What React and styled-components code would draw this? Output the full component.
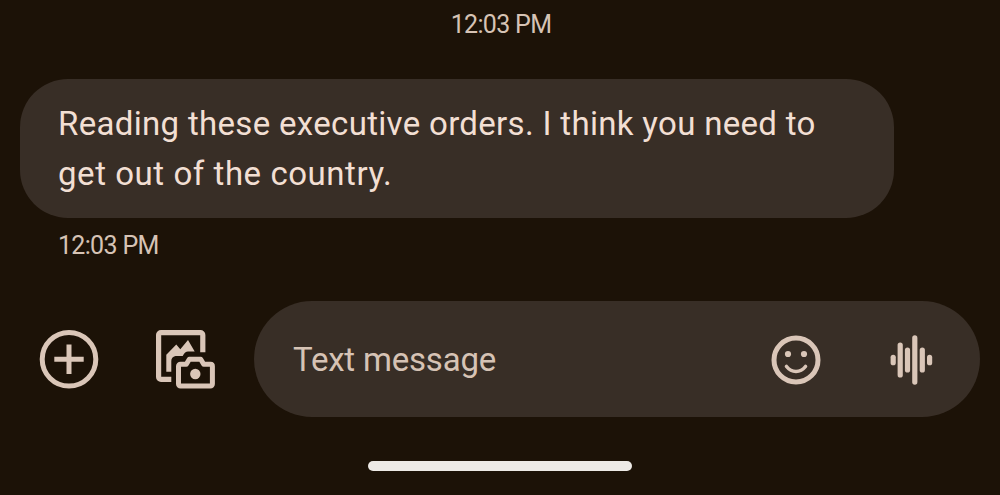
import React from 'react'
import styled, { createGlobalStyle } from 'styled-components'

const GlobalStyle = createGlobalStyle`
  * {
    box-sizing: border-box;
  }

  body {
    margin: 0;
    background-color: #1c1207;
    font-family: Roboto, 'Liberation Sans', sans-serif;
  }
`

const Screen = styled.main`
  display: flex;
  flex-direction: column;
  width: 1000px;
  height: 495px;
  overflow: hidden;
  background-color: #1c1207;
`

const Timestamp = styled.time`
  display: block;
  font-size: 25px;
  line-height: 30px;
  letter-spacing: -0.68px;
  color: #d6c3b5;
  white-space: nowrap;
`

const Divider = styled.div`
  display: flex;
  justify-content: center;
  padding: 10px 0 0 2px;
`

const Message = styled.article`
  padding: 39px 20px 0;
`

const Bubble = styled.div`
  width: 874px;
  height: 139px;
  padding: 20px 38px 0;
  border-radius: 48px;
  background-color: #382e26;
`

const Line = styled.span`
  display: block;
  font-size: 33px;
  line-height: 50px;
  letter-spacing: ${({ $tracking }) => $tracking}px;
  color: #f2dfd3;
  white-space: nowrap;
`

const Received = styled.div`
  padding: 13px 0 0 38px;
`

const Composer = styled.footer`
  display: flex;
  align-items: center;
  height: 116px;
  margin-top: 40px;
  padding: 0 20px 0 39px;
`

const IconButton = styled.button`
  display: flex;
  flex: none;
  width: ${({ $size }) => $size}px;
  height: ${({ $size }) => $size}px;
  margin: 0 ${({ $gap }) => $gap || 0}px 0 0;
  padding: 0;
  border: 0;
  background: none;
  color: #dac6b8;
  cursor: pointer;

  & svg {
    width: 100%;
    height: 100%;
  }
`

const Field = styled.div`
  display: flex;
  align-items: center;
  flex: 1;
  height: 116px;
  padding: 1px 41px 0 39px;
  border-radius: 58px;
  background-color: #382e26;
`

const Placeholder = styled.span`
  flex: 1;
  font-size: 33px;
  line-height: 40px;
  letter-spacing: -0.2px;
  color: #d6c3b5;
  white-space: nowrap;
`

const HomeBar = styled.div`
  width: 264px;
  height: 10px;
  margin: 44px auto 0;
  border-radius: 5px;
  background-color: #edeae6;
`

const AddIcon = () => (
  <svg viewBox="0 0 60 60" fill="none" stroke="currentColor" strokeWidth="5">
    <circle cx="30" cy="30.3" r="26.8" />
    <path d="M30 15.5v29.500M15.300 30.300h29.400" />
  </svg>
)

const GalleryIcon = () => (
  <svg viewBox="0 0 60 60" fill="none">
    <path
      d="M16.300 50.300H6A2.400 2.400 0 0 1 3.600 47.900V6.100A2.400 2.400 0 0 1 6 3.700H45.400A2.400 2.400 0 0 1 47.800 6.100V23.300"
      stroke="currentColor"
      strokeWidth="5.2"
    />
    <path
      d="M11.300 42.700V25.700L21.300 15.500L25.300 20.200L33 11L39.700 22.600H33Q30 22.600 27.700 27H20.500Q16.300 28 16.300 32V42.700Z"
      fill="currentColor"
    />
    <path
      d="M25.500 35.200H31.300L34.300 30.200H45.700L48.700 35.200H55.500A2 2 0 0 1 57.400 37.200V55A2 2 0 0 1 55.400 57H25.500A2 2 0 0 1 23.500 55V37.200A2 2 0 0 1 25.500 35.200Z"
      stroke="currentColor"
      strokeWidth="5"
      strokeLinejoin="round"
    />
    <circle cx="40.300" cy="45" r="5.200" fill="currentColor" />
  </svg>
)

const EmojiIcon = () => (
  <svg viewBox="0 0 50 50" fill="none">
    <circle cx="25" cy="25" r="22" stroke="currentColor" strokeWidth="5" />
    <circle cx="17" cy="19" r="3.1" fill="currentColor" />
    <circle cx="33" cy="19" r="3.1" fill="currentColor" />
    <path d="M15.500 31.500Q19.500 36.500 25 36.500T34.500 31.500" stroke="currentColor" strokeWidth="3.600" strokeLinecap="round" />
  </svg>
)

const bars = [
  [4.2, 10.6],
  [11.2, 35],
  [18.5, 25],
  [25.8, 49.4],
  [33.3, 25],
  [40.6, 10.6],
]

const VoiceIcon = () => (
  <svg viewBox="0 0 50 50" fill="currentColor">
    {bars.map(([x, height]) => (
      <rect key={x} x={x - 2.6} y={25 - height / 2} width="5.2" height={height} rx="2.6" />
    ))}
  </svg>
)

const lines = [
  { text: 'Reading these executive orders. I think you need to', tracking: 0.32 },
  { text: 'get out of the country.', tracking: 0.55 },
]

const App = () => (
  <>
    <GlobalStyle />
    <Screen>
      <Divider>
        <Timestamp>12:03 PM</Timestamp>
      </Divider>
      <Message>
        <Bubble>
          {lines.map(({ text, tracking }) => (
            <Line key={text} $tracking={tracking}>{text}</Line>
          ))}
        </Bubble>
        <Received>
          <Timestamp>12:03 PM</Timestamp>
        </Received>
      </Message>
      <Composer>
        <IconButton $size={60} $gap={56} aria-label="Add">
          <AddIcon />
        </IconButton>
        <IconButton $size={60} $gap={39} aria-label="Gallery">
          <GalleryIcon />
        </IconButton>
        <Field>
          <Placeholder>Text message</Placeholder>
          <IconButton $size={50} $gap={68} aria-label="Emoji">
            <EmojiIcon />
          </IconButton>
          <IconButton $size={50} aria-label="Voice message">
            <VoiceIcon />
          </IconButton>
        </Field>
      </Composer>
      <HomeBar />
    </Screen>
  </>
)

export default App
